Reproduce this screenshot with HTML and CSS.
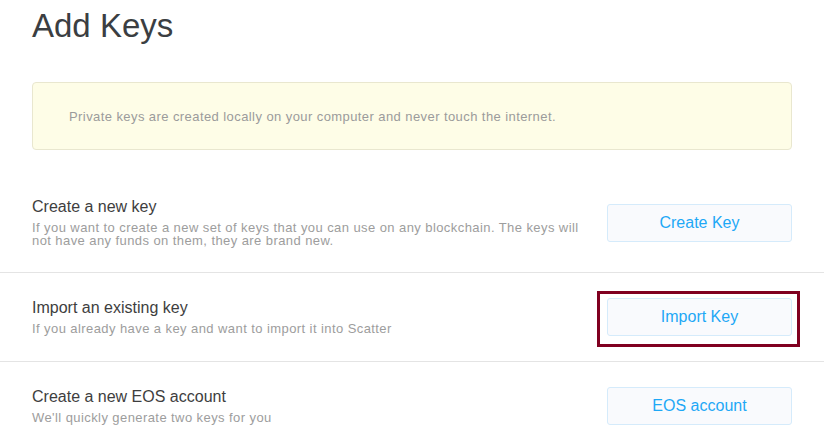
FILE: index.html
```html
<!DOCTYPE html>
<html>
<head>
<meta charset="utf-8">
<link rel="stylesheet" href="styles.css">
</head>
<body>
<div class="page">
  <h1 class="title">Add Keys</h1>
  <div class="notice">Private keys are created locally on your computer and never touch the internet.</div>
  <div class="rows">
    <div class="row">
      <div class="info">
        <div class="heading">Create a new key</div>
        <div class="desc">If you want to create a new set of keys that you can use on any blockchain. The keys will not have any funds on them, they are brand new.</div>
      </div>
      <div class="action"><button class="btn">Create Key</button></div>
    </div>
    <div class="row">
      <div class="info">
        <div class="heading">Import an existing key</div>
        <div class="desc">If you already have a key and want to import it into Scatter</div>
      </div>
      <div class="action highlighted"><button class="btn">Import Key</button><span class="highlight"></span></div>
    </div>
    <div class="row">
      <div class="info">
        <div class="heading">Create a new EOS account</div>
        <div class="desc">We'll quickly generate two keys for you</div>
      </div>
      <div class="action"><button class="btn">EOS account</button></div>
    </div>
  </div>
</div>
</body>
</html>
```

FILE: styles.css
```css
* { box-sizing: border-box; }
html, body {
  margin: 0;
  padding: 0;
  background: #ffffff;
  font-family: "Liberation Sans", Arial, sans-serif;
}
.page {
  width: 824px;
  height: 445px;
  overflow: hidden;
}
.title {
  margin: 0;
  padding: 6px 32px 0;
  font-size: 33px;
  line-height: 40px;
  font-weight: normal;
  color: #3b3e42;
}
.notice {
  margin: 36px 32px 0;
  height: 68px;
  padding: 0 36px;
  display: flex;
  align-items: center;
  background: #fefde7;
  border: 1px solid #e9e7cf;
  border-radius: 4px;
  font-size: 13px;
  line-height: 15px;
  letter-spacing: 0.42px;
  color: #9b9b9b;
}
.rows {
  margin-top: 23px;
}
.row {
  display: flex;
  align-items: center;
  padding: 25px 32px;
  border-bottom: 1px solid #e4e4e4;
}
.info {
  flex: 1;
  margin-right: 20px;
}
.heading {
  font-size: 16px;
  line-height: 18px;
  color: #3e3e3e;
}
.desc {
  margin-top: 5px;
  font-size: 13px;
  line-height: 13px;
  letter-spacing: 0.42px;
  color: #9d9d9d;
}
.action {
  position: relative;
  flex: none;
}
.btn {
  display: block;
  width: 185px;
  height: 38px;
  padding: 0;
  background: #f9fafd;
  border: 1px solid #d5ebfb;
  border-radius: 3px;
  font-family: "Liberation Sans", Arial, sans-serif;
  font-size: 16px;
  color: #1ea8f6;
  cursor: pointer;
}
.highlight {
  position: absolute;
  top: -7px;
  left: -10px;
  right: -8px;
  bottom: -11px;
  border: 3px solid #800020;
  pointer-events: none;
}
```
